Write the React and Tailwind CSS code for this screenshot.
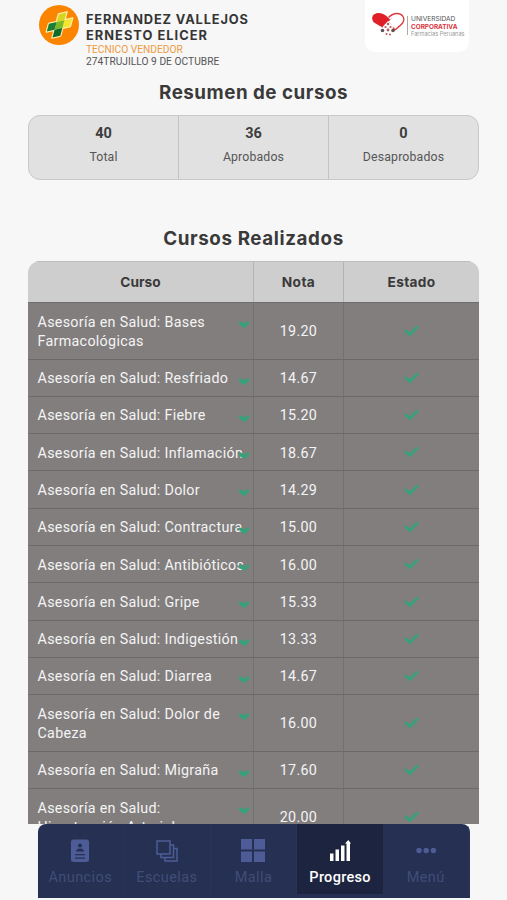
import { FaCheck } from "react-icons/fa";

const stats = [
  { value: "40", label: "Total" },
  { value: "36", label: "Aprobados" },
  { value: "0", label: "Desaprobados" },
];

const cursos = [
  { name: "Asesoría en Salud: Bases Farmacológicas", nota: "19.20" },
  { name: "Asesoría en Salud: Resfriado", nota: "14.67" },
  { name: "Asesoría en Salud: Fiebre", nota: "15.20" },
  { name: "Asesoría en Salud: Inflamación", nota: "18.67" },
  { name: "Asesoría en Salud: Dolor", nota: "14.29" },
  { name: "Asesoría en Salud: Contractura", nota: "15.00" },
  { name: "Asesoría en Salud: Antibióticos", nota: "16.00" },
  { name: "Asesoría en Salud: Gripe", nota: "15.33" },
  { name: "Asesoría en Salud: Indigestión", nota: "13.33" },
  { name: "Asesoría en Salud: Diarrea", nota: "14.67" },
  { name: "Asesoría en Salud: Dolor de Cabeza", nota: "16.00" },
  { name: "Asesoría en Salud: Migraña", nota: "17.60" },
  { name: "Asesoría en Salud: Hipertensión Arterial", nota: "20.00" },
];

const Avatar = () => (
  <svg viewBox="0 0 40 40" className="h-10 w-10 shrink-0">
    <circle cx="20" cy="20" r="20" fill="#fb8500" />
    <g transform="matrix(.97 -.22 -.26 .97 20.500 20)">
      <path
        d="M-4-12h8v8h8v8h-8v8h-8v-8h-8v-8h8z"
        fill="#fff3b0"
        stroke="#fff3b0"
        strokeWidth="2.5"
        strokeLinejoin="round"
      />
      <path d="M-4-12h8v8h-8z" fill="#d9d51c" />
      <path d="M4-4h8v8h-8z" fill="#f3e52a" />
      <path d="M-4-4h8v8h-8z" fill="#7cb928" />
      <path d="M-12-4h8v8h-8z" fill="#1d7f35" />
      <path d="M-4 4h8v8h-8z" fill="#0c6b2d" />
    </g>
  </svg>
);

const HeartLogo = () => (
  <svg viewBox="0 0 34 26" className="h-[26px] w-[34px] shrink-0">
    <path
      d="M21.500 5.500L11.500 15.500 3 10.500C-1 6 2 1 7.500 1C11 1 13 2 16.500 5L19 7.500z"
      fill="#df2029"
    />
    <path
      d="M17.500 5.500C21 2 23 1.500 26 1.500C32 1.500 34.500 7 31.500 11C30 13 27 15.500 24 18L17.500 10.500"
      fill="none"
      stroke="#d83a40"
      strokeWidth="1.300"
    />
    <path d="M17 9l5.500 6-5.500 6-5.500-6z" fill="#fff" />
    <g fill="#b9555a">
      <circle cx="17" cy="12" r="1.200" />
      <circle cx="14.500" cy="15" r="1.100" />
      <circle cx="19.500" cy="15" r="1.100" />
      <circle cx="17" cy="18" r="1.400" />
      <circle cx="15.500" cy="22" r="1" />
      <circle cx="19" cy="22.500" r="1" />
    </g>
    <circle cx="11.500" cy="18.500" r="1.800" fill="#555" />
    <circle cx="22" cy="18.500" r="1.800" fill="#555" />
  </svg>
);

const Chevron = () => (
  <svg viewBox="0 0 12 9" className="absolute top-[17px] right-[3px] h-[9px] w-3">
    <path d="M.5 2C2 1 4 1.800 6 3.500C8 1.800 10 1 11.500 2C11 4.800 8.500 6.500 6 8C3.500 6.500 1 4.800 .5 2z" fill="#36a17a" />
  </svg>
);

const AnunciosIcon = () => (
  <svg viewBox="0 0 20 24" className="h-6 w-5">
    <rect x="1" y="0.5" width="18" height="22.500" rx="2.500" fill="currentColor" />
    <g fill="#263052">
      <circle cx="10" cy="6.500" r="2" />
      <path d="M6 12.500c0-4 8-4 8 0z" />
      <path d="M5 15h10v1.300H5zM5 18.500h10v1.300H5z" />
    </g>
  </svg>
);

const EscuelasIcon = () => (
  <svg viewBox="0 0 24 24" className="h-6 w-6" fill="none" stroke="currentColor" strokeWidth="1.500">
    <path d="M2 2h13v13H2z" />
    <path d="M15 6h3.500v12.500H6V15" />
    <path d="M18.500 9.500H22V22H10v-3.500" />
  </svg>
);

const MallaIcon = () => (
  <svg viewBox="0 0 24 24" className="h-6 w-6" fill="currentColor">
    <path d="M0 0h11v10.500H0zM13 0h11v10.500H13zM0 12.500h11V23H0zM13 12.500h11V23H13z" />
  </svg>
);

const ProgresoIcon = () => (
  <svg viewBox="0 0 24 24" className="h-6 w-6" fill="currentColor">
    <path d="M2 14.500h3.500V22H2zM7.500 10.500H11V22H7.500zM13 6.500h3.500V22H13z" />
    <path d="M18.500 4.500h-1.500L20.300 1 23 4.500h-1V22h-3.500z" />
  </svg>
);

const MenuIcon = () => (
  <svg viewBox="0 0 24 24" className="h-6 w-6" fill="currentColor">
    <circle cx="5" cy="11.500" r="2.700" />
    <circle cx="12.200" cy="11.500" r="2.700" />
    <circle cx="19.400" cy="11.500" r="2.700" />
  </svg>
);

const tabs = [
  { label: "Anuncios", icon: AnunciosIcon },
  { label: "Escuelas", icon: EscuelasIcon },
  { label: "Malla", icon: MallaIcon },
  { label: "Progreso", icon: ProgresoIcon, active: true },
  { label: "Menú", icon: MenuIcon },
];

const Header = () => (
  <header className="flex h-[75px] shrink-0 justify-between pr-[38px] pl-[39px]">
    <div className="flex gap-[7px] pt-[5px]">
      <Avatar />
      <div className="pt-[7px] whitespace-nowrap">
        <h1 className="font-['Inter',sans-serif] text-[12.8px] leading-4 font-bold tracking-[0.85px] text-[#353535]">
          FERNANDEZ VALLEJOS
          <br />
          <span className="tracking-[1.05px]">ERNESTO ELICER</span>
        </h1>
        <p className="text-[10.2px] leading-3 text-[#ee9a41]">TECNICO VENDEDOR</p>
        <p className="text-[10.2px] leading-3 tracking-[0.03px] text-[#555]">274TRUJILLO 9 DE OCTUBRE</p>
      </div>
    </div>
    <div className="flex h-[52px] w-[104px] gap-[2px] rounded-b-[10px] bg-white pt-3 pl-[6px]">
      <HeartLogo />
      <div className="mt-1 h-[19px] w-px shrink-0 bg-[#aaa]" />
      <div className="pt-[3px] pl-px font-['Inter',sans-serif] whitespace-nowrap">
        <p className="text-[6.6px] leading-[8px] text-[#555]">UNIVERSIDAD</p>
        <p className="text-[6.4px] leading-[8px] font-bold text-[#d9343a]">CORPORATIVA</p>
        <p className="text-[5.600px] leading-[7px] text-[#999]">Farmacias Peruanas</p>
      </div>
    </div>
  </header>
);

const App = () => {
  return (
    <div className="flex h-[900px] w-full flex-col overflow-hidden bg-[#f7f7f7] font-['Roboto',sans-serif]">
      <Header />

      <main className="flex min-h-0 flex-1 flex-col overflow-hidden px-7">
        <h2 className="mt-[6px] text-center font-['Inter',sans-serif] text-[18.8px] leading-6 font-bold tracking-[0.5px] text-[#3a3a3a]">
          Resumen de cursos
        </h2>
        <div className="mt-[10px] flex h-[65px] shrink-0 overflow-hidden rounded-xl border border-[#c9c9c9] bg-[#e1e1e1]">
          {stats.map((s) => (
            <div key={s.label} className="flex-1 border-r border-[#c3c3c3] pt-2 text-center last:border-r-0">
              <p className="text-[14.5px] leading-5 font-bold text-[#3d3d3d]">{s.value}</p>
              <p className="mt-1 text-[12.3px] leading-[18px] tracking-[0.15px] text-[#555]">{s.label}</p>
            </div>
          ))}
        </div>

        <h2 className="mt-[47px] text-center font-['Inter',sans-serif] text-[18.8px] leading-6 font-bold tracking-[0.6px] text-[#3a3a3a]">
          Cursos Realizados
        </h2>
        <div className="mt-[10px] overflow-hidden rounded-t-xl">
          <div className="grid h-[42px] grid-cols-[226px_90px_1fr] border-t border-b border-t-[#bdbdbd] border-b-[#6f6d6d] bg-[#cecece] text-center font-['Inter',sans-serif] text-[13.7px] leading-10 font-bold text-[#3a3a3a]">
            <div className="border-r border-[#b3b3b3]">Curso</div>
            <div className="border-r border-[#b3b3b3] tracking-[0.4px]">Nota</div>
            <div className="tracking-[0.3px]">Estado</div>
          </div>
          {cursos.map((c) => (
            <div
              key={c.name}
              className="grid grid-cols-[226px_90px_1fr] border-b border-[#6d6969] bg-[#827e7e] text-[14.3px] leading-[19.3px] tracking-[0.3px] text-[#f4f4f4]"
            >
              <div className="relative border-r border-[#737070] pt-[9.500px] pr-2 pb-[7.500px] pl-[9.500px]">
                <p>{c.name}</p>
                <Chevron />
              </div>
              <div className="flex items-center justify-center border-r border-[#737070] pt-[2px]">{c.nota}</div>
              <div className="flex items-center justify-center">
                <FaCheck className="h-[14px] w-[15px] text-[#36a17a]" />
              </div>
            </div>
          ))}
        </div>
      </main>

      <footer className="h-[76px] shrink-0 px-[37.500px]">
        <nav className="flex h-[74px] overflow-hidden rounded-t-lg bg-[#263052]">
          {tabs.map(({ label, icon: Icon, active }) => (
            <div
              key={label}
              className={
                active
                  ? "flex h-[70px] flex-1 flex-col items-center bg-[#1d243f] pt-[15px] text-white"
                  : "flex h-[70px] flex-1 flex-col items-center border-r border-[#2a3458] pt-[15px] text-[#4d5c96]"
              }
            >
              <Icon />
              <span
                className={
                  active
                    ? "mt-[5px] text-[14.5px] leading-5 font-medium tracking-[0.3px] text-white"
                    : "mt-[5px] text-[14.5px] leading-5 tracking-[0.4px] text-[#414d78]"
                }
              >
                {label}
              </span>
            </div>
          ))}
        </nav>
      </footer>
    </div>
  );
};

export default App;
